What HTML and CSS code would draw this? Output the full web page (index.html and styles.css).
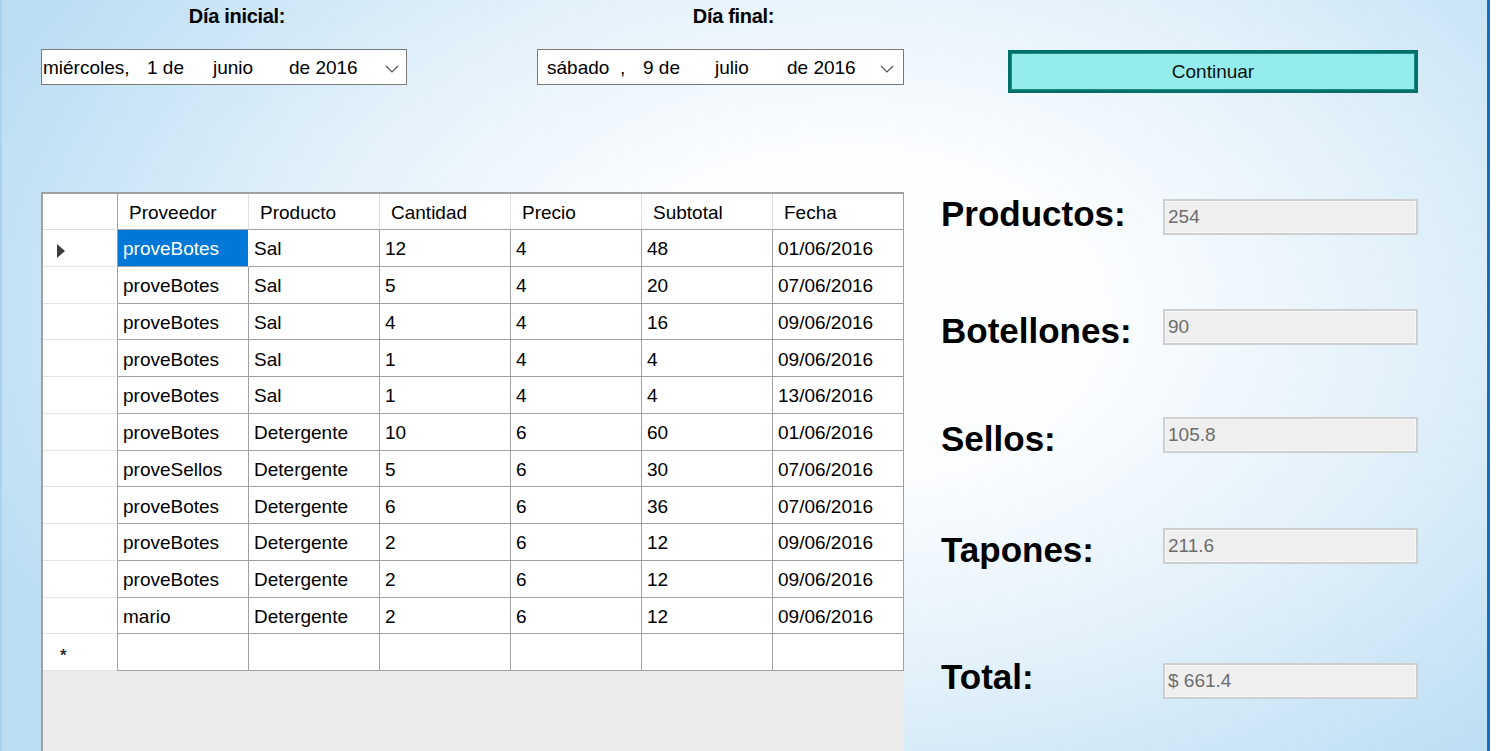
FILE: index.html
```html
<!DOCTYPE html>
<html lang="es">
<head>
<meta charset="utf-8">
<title>Reporte de compras</title>
<link rel="stylesheet" href="styles.css">
</head>
<body>
<div class="window">
  <div class="top">
    <div class="field field-1">
      <div class="top-label">Día inicial:</div>
      <div class="picker picker-1">
        <span class="seg w104">miércoles,</span>
        <span class="seg w66">1 de</span>
        <span class="seg w76">junio</span>
        <span class="seg">de 2016</span>
        <svg class="chev" width="14" height="8" viewBox="0 0 14 8"><polyline points="1,1 7,7 13,1" fill="none" stroke="#555" stroke-width="1.2"/></svg>
      </div>
    </div>
    <div class="field field-2">
      <div class="top-label">Día final:</div>
      <div class="picker picker-2">
        <span class="seg w73">sábado</span>
        <span class="seg w23">,</span>
        <span class="seg w72">9 de</span>
        <span class="seg w72">julio</span>
        <span class="seg">de 2016</span>
        <svg class="chev" width="14" height="8" viewBox="0 0 14 8"><polyline points="1,1 7,7 13,1" fill="none" stroke="#555" stroke-width="1.2"/></svg>
      </div>
    </div>
    <button class="btn">Continuar</button>
  </div>

  <div class="main">
    <div class="grid">
      <div class="table">
        <div class="hc rh"></div>
        <div class="hc">Proveedor</div>
        <div class="hc">Producto</div>
        <div class="hc">Cantidad</div>
        <div class="hc">Precio</div>
        <div class="hc">Subtotal</div>
        <div class="hc">Fecha</div>

        <div class="rc"><span class="arrow"></span></div>
        <div class="c sel">proveBotes</div><div class="c">Sal</div><div class="c">12</div><div class="c">4</div><div class="c">48</div><div class="c">01/06/2016</div>

        <div class="rc"></div>
        <div class="c">proveBotes</div><div class="c">Sal</div><div class="c">5</div><div class="c">4</div><div class="c">20</div><div class="c">07/06/2016</div>

        <div class="rc"></div>
        <div class="c">proveBotes</div><div class="c">Sal</div><div class="c">4</div><div class="c">4</div><div class="c">16</div><div class="c">09/06/2016</div>

        <div class="rc"></div>
        <div class="c">proveBotes</div><div class="c">Sal</div><div class="c">1</div><div class="c">4</div><div class="c">4</div><div class="c">09/06/2016</div>

        <div class="rc"></div>
        <div class="c">proveBotes</div><div class="c">Sal</div><div class="c">1</div><div class="c">4</div><div class="c">4</div><div class="c">13/06/2016</div>

        <div class="rc"></div>
        <div class="c">proveBotes</div><div class="c">Detergente</div><div class="c">10</div><div class="c">6</div><div class="c">60</div><div class="c">01/06/2016</div>

        <div class="rc"></div>
        <div class="c">proveSellos</div><div class="c">Detergente</div><div class="c">5</div><div class="c">6</div><div class="c">30</div><div class="c">07/06/2016</div>

        <div class="rc"></div>
        <div class="c">proveBotes</div><div class="c">Detergente</div><div class="c">6</div><div class="c">6</div><div class="c">36</div><div class="c">07/06/2016</div>

        <div class="rc"></div>
        <div class="c">proveBotes</div><div class="c">Detergente</div><div class="c">2</div><div class="c">6</div><div class="c">12</div><div class="c">09/06/2016</div>

        <div class="rc"></div>
        <div class="c">proveBotes</div><div class="c">Detergente</div><div class="c">2</div><div class="c">6</div><div class="c">12</div><div class="c">09/06/2016</div>

        <div class="rc"></div>
        <div class="c">mario</div><div class="c">Detergente</div><div class="c">2</div><div class="c">6</div><div class="c">12</div><div class="c">09/06/2016</div>

        <div class="rc"><span class="star">*</span></div>
        <div class="c"></div><div class="c"></div><div class="c"></div><div class="c"></div><div class="c"></div><div class="c"></div>
      </div>
    </div>

    <div class="stats">
      <div class="stat s1"><div class="stat-label up3">Productos:</div><div class="box">254</div></div>
      <div class="stat s2"><div class="stat-label down4">Botellones:</div><div class="box">90</div></div>
      <div class="stat s3"><div class="stat-label down4">Sellos:</div><div class="box">105.8</div></div>
      <div class="stat s4"><div class="stat-label down4">Tapones:</div><div class="box">211.6</div></div>
      <div class="stat s5"><div class="stat-label up4">Total:</div><div class="box">$ 661.4</div></div>
    </div>
  </div>
</div>
</body>
</html>
```

FILE: styles.css
```css
* { box-sizing: border-box; }
html, body { margin: 0; padding: 0; background: #ffffff; }
body { font-family: "Liberation Sans", Arial, sans-serif; color: #000; }

.window {
  width: 1490px;
  height: 751px;
  overflow: hidden;
  border-left: 2px solid #a9d3ef;
  border-right: 3px solid #1470c6;
  background:
    radial-gradient(ellipse 62% 80% at 57% 42%, #ffffff 0%, #fbfdff 28%, #e3f1fa 60%, #bcdef3 100%);
}

/* top area */
.top {
  display: flex;
  align-items: flex-start;
  height: 192px;
  padding-left: 39px;
}
.field { display: flex; flex-direction: column; }
.field-1 { width: 366px; }
.field-2 { width: 367px; margin-left: 130px; }
.top-label {
  font-weight: bold;
  font-size: 20px;
  line-height: 24px;
  height: 24px;
  margin-top: 4px;
  text-align: center;
  padding-left: 26px;
  letter-spacing: -0.3px;
}
.picker {
  margin-top: 21px;
  height: 36px;
  background: #fff;
  border: 1px solid #7a7a7a;
  display: flex;
  align-items: center;
  font-size: 19px;
  white-space: nowrap;
  padding-top: 2px;
}
.picker-1 { padding-left: 1px; }
.picker-2 { padding-left: 9px; }
.seg { display: inline-block; }
.w104 { width: 104px; }
.w66 { width: 66px; }
.w76 { width: 76px; }
.w73 { width: 73px; }
.w23 { width: 23px; }
.w72 { width: 72px; }
.chev { margin-left: auto; margin-right: 7px; margin-top: 2px; }
.picker-2 .chev { margin-right: 9px; }

.btn {
  margin-left: 104px;
  margin-top: 50px;
  width: 410px;
  height: 43px;
  background: #94ecec;
  border: 3px solid #00706a;
  box-shadow: inset 0 0 0 1px #1e8c84;
  font-family: "Liberation Sans", Arial, sans-serif;
  font-size: 19px;
  color: #111;
  padding: 0;
}

/* main area */
.main { display: flex; align-items: flex-start; padding-left: 39px; }

.grid {
  width: 863px;
  height: 600px;
  background: #ececec;
  border-top: 2px solid #a0a0a0;
  border-left: 2px solid #a0a0a0;
}
.table {
  display: grid;
  grid-template-columns: 75px repeat(6, 131px);
  grid-template-rows: 36px;
  grid-auto-rows: 36.75px;
  font-size: 19px;
  background: #fff;
}
.hc {
  background: #fff;
  border-right: 1px solid #e0e0e0;
  border-bottom: 1px solid #a0a0a0;
  display: flex;
  align-items: center;
  padding-left: 11px;
  padding-top: 3px;
  white-space: nowrap;
}
.hc.rh { border-right: 1px solid #a0a0a0; border-bottom: 1px solid #e0e0e0; }
.table > .hc:nth-child(7) { border-right: 1px solid #a0a0a0; }
.rc {
  background: #fff;
  border-right: 1px solid #a0a0a0;
  border-bottom: 1px solid #e3e3e3;
  display: flex;
  align-items: center;
}
.c {
  background: #fff;
  border-right: 1px solid #a0a0a0;
  border-bottom: 1px solid #a0a0a0;
  display: flex;
  align-items: center;
  padding-left: 5px;
  padding-top: 3px;
  white-space: nowrap;
}
.c.sel { background: #0078d7; color: #fff; border-right-color: #fff; }
.arrow {
  width: 0;
  height: 0;
  margin-left: 14px;
  margin-top: 7px;
  border-left: 8px solid #3c3c3c;
  border-top: 7px solid transparent;
  border-bottom: 7px solid transparent;
}
.star {
  margin-left: 17px;
  margin-top: 8px;
  font-size: 17px;
  font-weight: bold;
  color: #333;
}

/* stats */
.stats { margin-left: 37px; display: flex; flex-direction: column; }
.stat { display: flex; align-items: center; height: 36px; }
.s1 { margin-top: 7px; }
.s2 { margin-top: 74px; }
.s3 { margin-top: 72px; }
.s4 { margin-top: 75px; }
.s5 { margin-top: 99px; }
.stat-label {
  width: 222px;
  font-weight: bold;
  font-size: 35px;
  line-height: 36px;
  white-space: nowrap;
}
.up3 { margin-bottom: 6px; }
.up4 { margin-bottom: 8px; }
.down4 { margin-top: 8px; }
.box {
  width: 255px;
  height: 36px;
  background: #efefef;
  border: 2px solid #cfcfcf;
  box-shadow: inset 0 0 0 1px #f7f7f7;
  color: #6d6d6d;
  font-size: 19px;
  display: flex;
  align-items: center;
  padding-left: 3px;
}
```
